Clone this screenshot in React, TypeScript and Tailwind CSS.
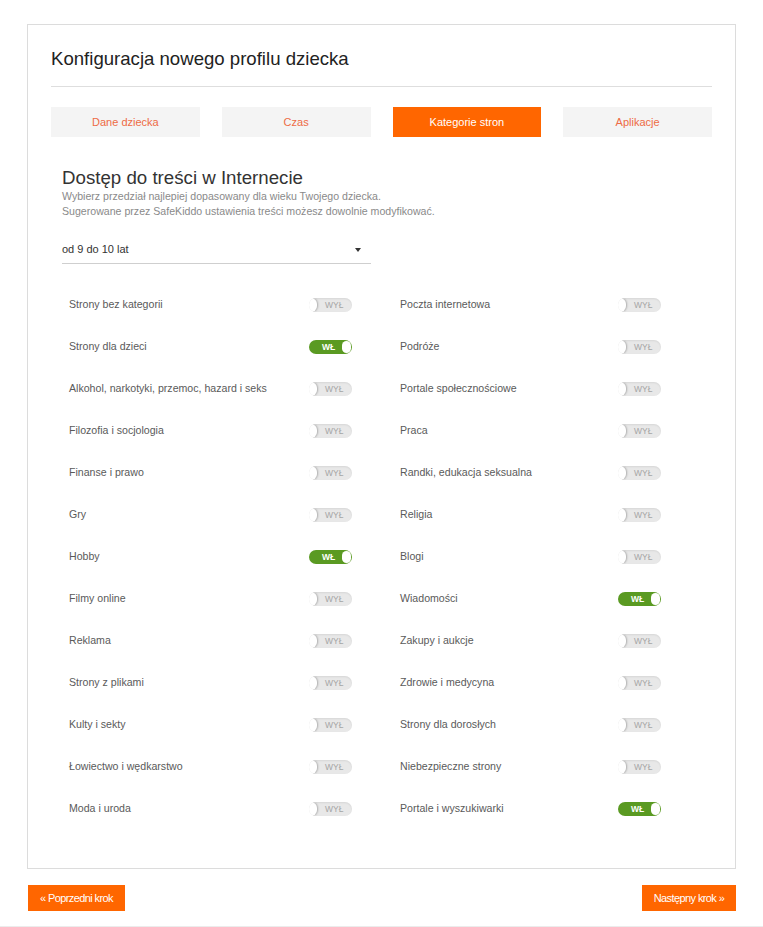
import React from "react";

type Category = { label: string; on: boolean };

const left: Category[] = [
  { label: "Strony bez kategorii", on: false },
  { label: "Strony dla dzieci", on: true },
  { label: "Alkohol, narkotyki, przemoc, hazard i seks", on: false },
  { label: "Filozofia i socjologia", on: false },
  { label: "Finanse i prawo", on: false },
  { label: "Gry", on: false },
  { label: "Hobby", on: true },
  { label: "Filmy online", on: false },
  { label: "Reklama", on: false },
  { label: "Strony z plikami", on: false },
  { label: "Kulty i sekty", on: false },
  { label: "Łowiectwo i wędkarstwo", on: false },
  { label: "Moda i uroda", on: false },
];

const right: Category[] = [
  { label: "Poczta internetowa", on: false },
  { label: "Podróże", on: false },
  { label: "Portale społecznościowe", on: false },
  { label: "Praca", on: false },
  { label: "Randki, edukacja seksualna", on: false },
  { label: "Religia", on: false },
  { label: "Blogi", on: false },
  { label: "Wiadomości", on: true },
  { label: "Zakupy i aukcje", on: false },
  { label: "Zdrowie i medycyna", on: false },
  { label: "Strony dla dorosłych", on: false },
  { label: "Niebezpieczne strony", on: false },
  { label: "Portale i wyszukiwarki", on: true },
];

const tabs = ["Dane dziecka", "Czas", "Kategorie stron", "Aplikacje"];

// Przełącznik WŁ / WYŁ
function Toggle({ on }: { on: boolean }) {
  if (on) {
    return (
      <div className="relative h-[14px] w-[43px] rounded-full bg-[#5a9a22]">
        <span className="absolute left-[13px] top-0 text-[8.5px] font-bold leading-[14px] text-white">
          WŁ
        </span>
        <span className="absolute right-[1px] top-[1px] h-[12px] w-[9px] rounded-full bg-white" />
      </div>
    );
  }
  return (
    <div className="relative h-[14px] w-[43px] overflow-hidden rounded-full bg-[#e8e8e8] shadow-[inset_0_1px_2px_rgba(0,0,0,0.08)]">
      <span className="absolute left-[-4px] top-0 h-[14px] w-[12px] rounded-full bg-white shadow-[1px_0_2px_rgba(0,0,0,0.25)]" />
      <span className="absolute left-[16px] top-0 text-[8.5px] leading-[14px] text-[#a5a5a5]">
        WYŁ
      </span>
    </div>
  );
}

export default function App() {
  return (
    <div
      className="min-h-[927px] bg-white pt-[24px]"
      style={{ fontFamily: '"Liberation Sans", Arial, sans-serif' }}
    >
      <div className="mx-[27px] border border-[#dcdcdc] pb-[38px] pl-[23px] pr-[23px] pt-[22px]">
        <h1 className="text-[18.6px] leading-[24px] text-[#222]">
          Konfiguracja nowego profilu dziecka
        </h1>
        <div className="mt-[15px] h-px bg-[#dedede]" />

        <div className="mt-[20px] grid grid-cols-4 gap-[22px]">
          {tabs.map((t, i) => (
            <div
              key={t}
              className={
                i === 2
                  ? "flex h-[30px] items-center justify-center bg-[#ff6600] text-[11px] text-white"
                  : "flex h-[30px] items-center justify-center bg-[#f4f4f4] text-[11px] text-[#ee6b45]"
              }
            >
              {t}
            </div>
          ))}
        </div>

        <div className="pl-[11px]">
          <h2 className="mt-[30px] text-[18.7px] leading-[22px] text-[#333]">
            Dostęp do treści w Internecie
          </h2>
          <p className="text-[10.6px] leading-[15px] text-[#8a8a8a]">
            Wybierz przedział najlepiej dopasowany dla wieku Twojego dziecka.
            <br />
            Sugerowane przez SafeKiddo ustawienia treści możesz dowolnie modyfikować.
          </p>

          <div className="mt-[17px] flex h-[28px] w-[309px] items-center justify-between border-b border-[#cfcfcf] pr-[10px]">
            <span className="text-[11px] text-[#333]">od 9 do 10 lat</span>
            <span className="h-0 w-0 border-x-[3px] border-t-[4px] border-x-transparent border-t-[#333]" />
          </div>

          <div className="mt-[20px]">
            {left.map((l, i) => (
              <div key={l.label} className="flex h-[42px] items-center">
                <div className="flex w-[309px] items-center justify-between pl-[7px] pr-[19px]">
                  <span className="text-[10.6px] text-[#5a5a5a]">{l.label}</span>
                  <Toggle on={l.on} />
                </div>
                <div className="ml-[22px] flex w-[289px] items-center justify-between pl-[7px] pr-[21px]">
                  <span className="text-[10.6px] text-[#5a5a5a]">{right[i].label}</span>
                  <Toggle on={right[i].on} />
                </div>
              </div>
            ))}
          </div>
        </div>
      </div>

      <div className="mx-[27px] mt-[16px] flex justify-between pl-px">
        <button className="h-[26px] w-[97px] bg-[#ff6600] text-[11px] tracking-[-0.6px] text-white">
          « Poprzedni krok
        </button>
        <button className="h-[26px] w-[94px] bg-[#ff6600] text-[11px] tracking-[-0.6px] text-white">
          Następny krok »
        </button>
      </div>
      <div className="mt-[15px] h-[2px] bg-[#ececec]" />
    </div>
  );
}
